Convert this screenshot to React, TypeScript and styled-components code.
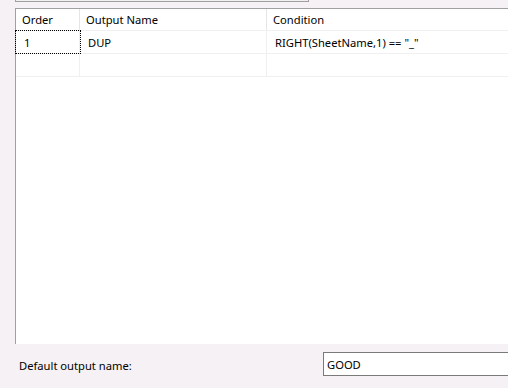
import React from "react"
import styled, { createGlobalStyle } from "styled-components"

const GlobalStyle = createGlobalStyle`
  body {
    margin: 0;
    background: #f5f1f4;
    font-family: "Noto Sans", "Open Sans", sans-serif;
    font-size: 11.2px;
    color: #000;
  }
`

interface OutputRow {
  order: string
  name: string
  condition: string
}

const rows: OutputRow[] = [
  { order: "1", name: "DUP", condition: 'RIGHT(SheetName,1) == "_"' },
  { order: "", name: "", condition: "" },
]

const Page = styled.div`
  width: 508px;
  height: 388px;
  overflow: hidden;
  display: flex;
  flex-direction: column;
  background: #f5f1f4;
`

const TopPanel = styled.div`
  margin-left: 15px;
  width: 292px;
  height: 1px;
  background: #f0f0f0;
  border: 1px solid #a0a0a0;
  border-top: none;
  flex-shrink: 0;
`

const Grid = styled.div`
  margin-top: 6px;
  margin-left: 15px;
  width: 520px;
  height: 335px;
  background: #fff;
  border-left: 1px solid #a0a0a0;
  border-top: 1px solid #a0a0a0;
  flex-shrink: 0;
  display: flex;
  flex-direction: column;
`

const Row = styled.div<{ $header?: boolean }>`
  display: grid;
  grid-template-columns: 64px 187px 1fr;
  height: ${(p) => (p.$header ? 22 : 23)}px;
  box-sizing: border-box;
  border-bottom: 1px solid #f0f0f0;
`

const Cell = styled.div<{ $header?: boolean; $focus?: boolean }>`
  display: flex;
  align-items: center;
  padding-left: ${(p) => (p.$header ? 6 : 8)}px;
  border-right: 1px solid ${(p) => (p.$header ? "#e5e5e5" : "#f0f0f0")};
  white-space: nowrap;
  box-sizing: border-box;
  ${(p) => p.$focus && "outline: 1px dotted #000; outline-offset: 0px;"}
`

const Footer = styled.div`
  display: flex;
  align-items: center;
  height: 44px;
  padding: 0 0 4px 19px;
  box-sizing: border-box;
  flex-shrink: 0;
`

const Label = styled.div`
  width: 304px;
  flex-shrink: 0;
  margin-top: 2px;
`

const TextBox = styled.div`
  width: 200px;
  height: 24px;
  flex-shrink: 0;
  background: #fff;
  border: 1px solid #7a7a7a;
  display: flex;
  align-items: center;
  padding-left: 3px;
  box-sizing: border-box;
`

export default function App() {
  return (
    <Page>
      <GlobalStyle />
      <TopPanel />
      <Grid>
        <Row $header>
          <Cell $header>Order</Cell>
          <Cell $header>Output Name</Cell>
          <Cell $header>Condition</Cell>
        </Row>
        {rows.map((r, i) => (
          <Row key={i}>
            <Cell $focus={i === 0}>{r.order}</Cell>
            <Cell>{r.name}</Cell>
            <Cell>{r.condition}</Cell>
          </Row>
        ))}
      </Grid>
      <Footer>
        <Label>Default output name:</Label>
        <TextBox>GOOD</TextBox>
      </Footer>
    </Page>
  )
}
